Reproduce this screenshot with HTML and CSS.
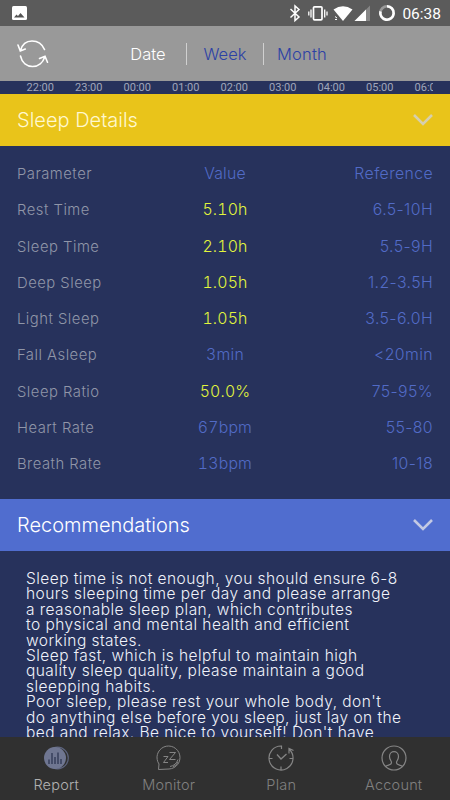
FILE: index.html
```html
<!DOCTYPE html>
<html lang="en">
<head>
    <meta charset="UTF-8">
    <meta name="viewport" content="width=device-width, initial-scale=1.0">
    <title>Sleep Report</title>
    <link rel="stylesheet" href="styles.css">
</head>
<body>
    <div class="app">
        <div class="status">
            <svg width="450" height="26" viewBox="0 0 450 26">
                <rect x="12" y="6" width="15" height="14" rx="1.5" fill="#fff"/>
                <path d="M14 17.500l2.500-3 1.500 1.500 2.500-3 4 4.500z" fill="#555"/>
                <path d="M290.500 9l8.500 8-4 3.500V6l4 3.500-8.500 8" fill="none" stroke="#fff" stroke-width="1.500"/>
                <rect x="313.500" y="6.800" width="8.500" height="13" rx="1" fill="none" stroke="#fff" stroke-width="1.700"/>
                <path d="M311 9.500v8M308.800 11.500v4M324.700 9.500v8M327 11.500v4" stroke="#fff" stroke-width="1.300"/>
                <path d="M333.500 9.500q9.500-6.500 19 0L343 21z" fill="#fff"/>
                <path d="M335 16.500l2 1.500M335 19.500h2" stroke="#fff"/>
                <path d="M370 5.500V21h-15.500z" fill="#868686"/>
                <path d="M366 9.500V21h-11.500z" fill="#fff"/>
                <circle cx="387" cy="13" r="6.700" fill="none" stroke="#999" stroke-width="2.600"/>
                <path d="M387 6.300a6.700 6.700 0 1 1-6.500 5" fill="none" stroke="#fff" stroke-width="2.600"/>
            </svg>
            <span class="clock">06:38</span>
        </div>
        <div class="header">
            <svg class="refresh" width="32" height="30" viewBox="0 0 32 30" fill="none" stroke="#fff" stroke-width="1.600" stroke-linecap="round">
                <path d="M27.500 10.500C25 4.500 20 2 15 2 9 2 5 6 3.500 11.500M1 6l2.300 6 5-2"/>
                <path d="M3.500 17C5 24 10 27.500 15.500 27.500c6 0 10.500-4 12.200-9.500M22.500 19.500l5.500-2.300 2.500 6"/>
            </svg>
            <div class="tabs">
                <span class="tab active">Date</span>
                <span class="tab">Week</span>
                <span class="tab">Month</span>
            </div>
        </div>
        <div class="hours">
            <span>22:00</span><span>23:00</span><span>00:00</span><span>01:00</span><span>02:00</span><span>03:00</span><span>04:00</span><span>05:00</span><span>06:00</span>
        </div>
        <div class="bar details">
            <span>Sleep Details</span>
            <svg width="20" height="14" viewBox="0 0 20 14" fill="none" stroke="#d6cfae" stroke-width="2.600"><path d="M1 2l9 9 9-9"/></svg>
        </div>
        <div class="table">
            <div class="row"><span>Parameter</span><span>Value</span><span>Reference</span></div>
            <div class="row"><span>Rest Time</span><span class="warn">5.10h</span><span>6.5-10H</span></div>
            <div class="row"><span>Sleep Time</span><span class="warn">2.10h</span><span>5.5-9H</span></div>
            <div class="row"><span>Deep Sleep</span><span class="warn">1.05h</span><span>1.2-3.5H</span></div>
            <div class="row"><span>Light Sleep</span><span class="warn">1.05h</span><span>3.5-6.0H</span></div>
            <div class="row"><span>Fall Asleep</span><span>3min</span><span>&lt;20min</span></div>
            <div class="row"><span>Sleep Ratio</span><span class="warn">50.0%</span><span>75-95%</span></div>
            <div class="row"><span>Heart Rate</span><span>67bpm</span><span>55-80</span></div>
            <div class="row"><span>Breath Rate</span><span>13bpm</span><span>10-18</span></div>
        </div>
        <div class="bar recommend">
            <span>Recommendations</span>
            <svg width="20" height="14" viewBox="0 0 20 14" fill="none" stroke="#c3c9e4" stroke-width="2.600"><path d="M1 2l9 9 9-9"/></svg>
        </div>
        <div class="advice">
            Sleep time is not enough, you should ensure 6-8<br>
            hours sleeping time per day and please arrange<br>
            a reasonable sleep plan, which contributes<br>
            to physical and mental health and efficient<br>
            working states.<br>
            Sleep fast, which is helpful to maintain high<br>
            quality sleep quality, please maintain a good<br>
            sleepping habits.<br>
            Poor sleep, please rest your whole body, don't<br>
            do anything else before you sleep, just lay on the<br>
            bed and relax. Be nice to yourself! Don't have
        </div>
        <div class="nav">
            <div class="item active">
                <svg width="28" height="28" viewBox="0 0 28 28">
                    <circle cx="15.500" cy="14" r="10.800" fill="none" stroke="#5c637d" stroke-width="1.200"/>
                    <circle cx="13" cy="14" r="11" fill="#6f7691"/>
                    <path d="M7 15.500v4.500M10 9v11M13 13v7M16 8.500V20M19 15v5" stroke="#333b57" stroke-width="1.400"/>
                </svg>
                <span>Report</span>
            </div>
            <div class="item">
                <svg width="28" height="28" viewBox="0 0 28 28" fill="none" stroke="#858585">
                    <path d="M3.500 25.500L4 20A11.500 11.500 0 1 1 14 25z"/>
                    <path d="M8.500 12.500h4.500l-4.500 6H13M14.500 8.500h6l-6 7h6"/>
                    <path d="M15 22.500q6-1 8-7M18 23q4-2 5-5"/>
                </svg>
                <span>Monitor</span>
            </div>
            <div class="item">
                <svg width="28" height="28" viewBox="0 0 28 28" fill="none" stroke="#858585">
                    <path d="M14.500 5V2A12 12 0 1 0 22.500 5.500M22 9.500V4.500l4.500 2M14 22.500v3M2.500 14.500H5.500M22.500 14.500h3" stroke-width="1.200"/>
                    <path d="M10 10.500l4 4.500 5.500-5" stroke-width="1.300"/>
                </svg>
                <span>Plan</span>
            </div>
            <div class="item">
                <svg width="28" height="28" viewBox="0 0 28 28" fill="none" stroke="#858585" stroke-width="1.200">
                    <circle cx="14" cy="14" r="12"/>
                    <path d="M5.500 22.500c2-2 6-1 6-4 0-1.500-2-3-2-6 0-6.500 9-6.500 9 0 0 3-2 4.500-2 6 0 3 4 2 6 4"/>
                </svg>
                <span>Account</span>
            </div>
        </div>
    </div>
</body>
</html>
```
FILE: styles.css
```css
* {
    box-sizing: border-box;
}
body {
    margin: 0;
    font-family: Inter, "Liberation Sans", sans-serif;
    font-weight: 300;
    background-color: #27325c;
}
.app {
    display: flex;
    flex-direction: column;
    width: 450px;
    height: 800px;
    overflow: hidden;
}
.app > div {
    flex-shrink: 0;
}
svg {
    display: block;
}
.status {
    position: relative;
    height: 26px;
    background-color: #5b5b5b;
}
.clock {
    position: absolute;
    right: 9px;
    top: 4px;
    font: 400 15.5px/20px Roboto, sans-serif;
    color: #fff;
}
.header {
    display: flex;
    align-items: center;
    height: 55px;
    padding-left: 17px;
    background-color: #999;
}
.tabs {
    display: flex;
    margin-left: 61px;
}
.tab {
    width: 77px;
    text-align: center;
    font-size: 16.5px;
    line-height: 22px;
    color: #2c41a5;
}
.tab + .tab {
    border-left: 1px solid #d0d0d0;
}
.tab.active {
    width: 76px;
    color: #fff;
}
.tab:last-child {
    letter-spacing: 0.2px;
}
.hours {
    display: flex;
    width: 433px;
    height: 13px;
    padding-left: 16px;
    overflow: hidden;
    font: 400 11px/13px Roboto, sans-serif;
    color: #a0a6ba;
}
.hours span {
    flex: 0 0 48.5px;
    text-align: center;
}
.bar {
    display: flex;
    align-items: center;
    justify-content: space-between;
    height: 52px;
    padding: 0 17px;
    font-size: 20px;
    color: #fff;
}
.details {
    background-color: #e9c41a;
    color: #fff8cf;
}
.recommend {
    background-color: #506dcf;
}
.table {
    height: 353px;
    padding: 10px 17px 0;
}
.row {
    display: grid;
    grid-template-columns: 1fr 1fr 1fr;
    height: 36.25px;
    line-height: 36px;
    font-size: 15.8px;
    letter-spacing: 0.4px;
    color: #526bc6;
}
.row span:first-child {
    font-size: 14.8px;
    letter-spacing: 0.5px;
    color: #9096a8;
}
.row span:nth-child(2) {
    text-align: center;
    font-variant-numeric: tabular-nums;
    letter-spacing: 0.2px;
}
.row span:last-child {
    text-align: right;
}
.row .warn {
    color: #e2f53c;
}
.advice {
    height: 186px;
    padding: 20px 0 0 26px;
    overflow: hidden;
    white-space: nowrap;
    font-size: 15.5px;
    line-height: 15.4px;
    letter-spacing: 0.45px;
    color: #f0f2fa;
}
.nav {
    display: flex;
    height: 63px;
    background-color: #303030;
}
.item {
    display: flex;
    flex-direction: column;
    align-items: center;
    width: 112.5px;
    padding-top: 7px;
    font-size: 14.5px;
    line-height: 26px;
    letter-spacing: 0.2px;
    color: #808080;
}
.item.active {
    color: #b0b0b0;
}
```
